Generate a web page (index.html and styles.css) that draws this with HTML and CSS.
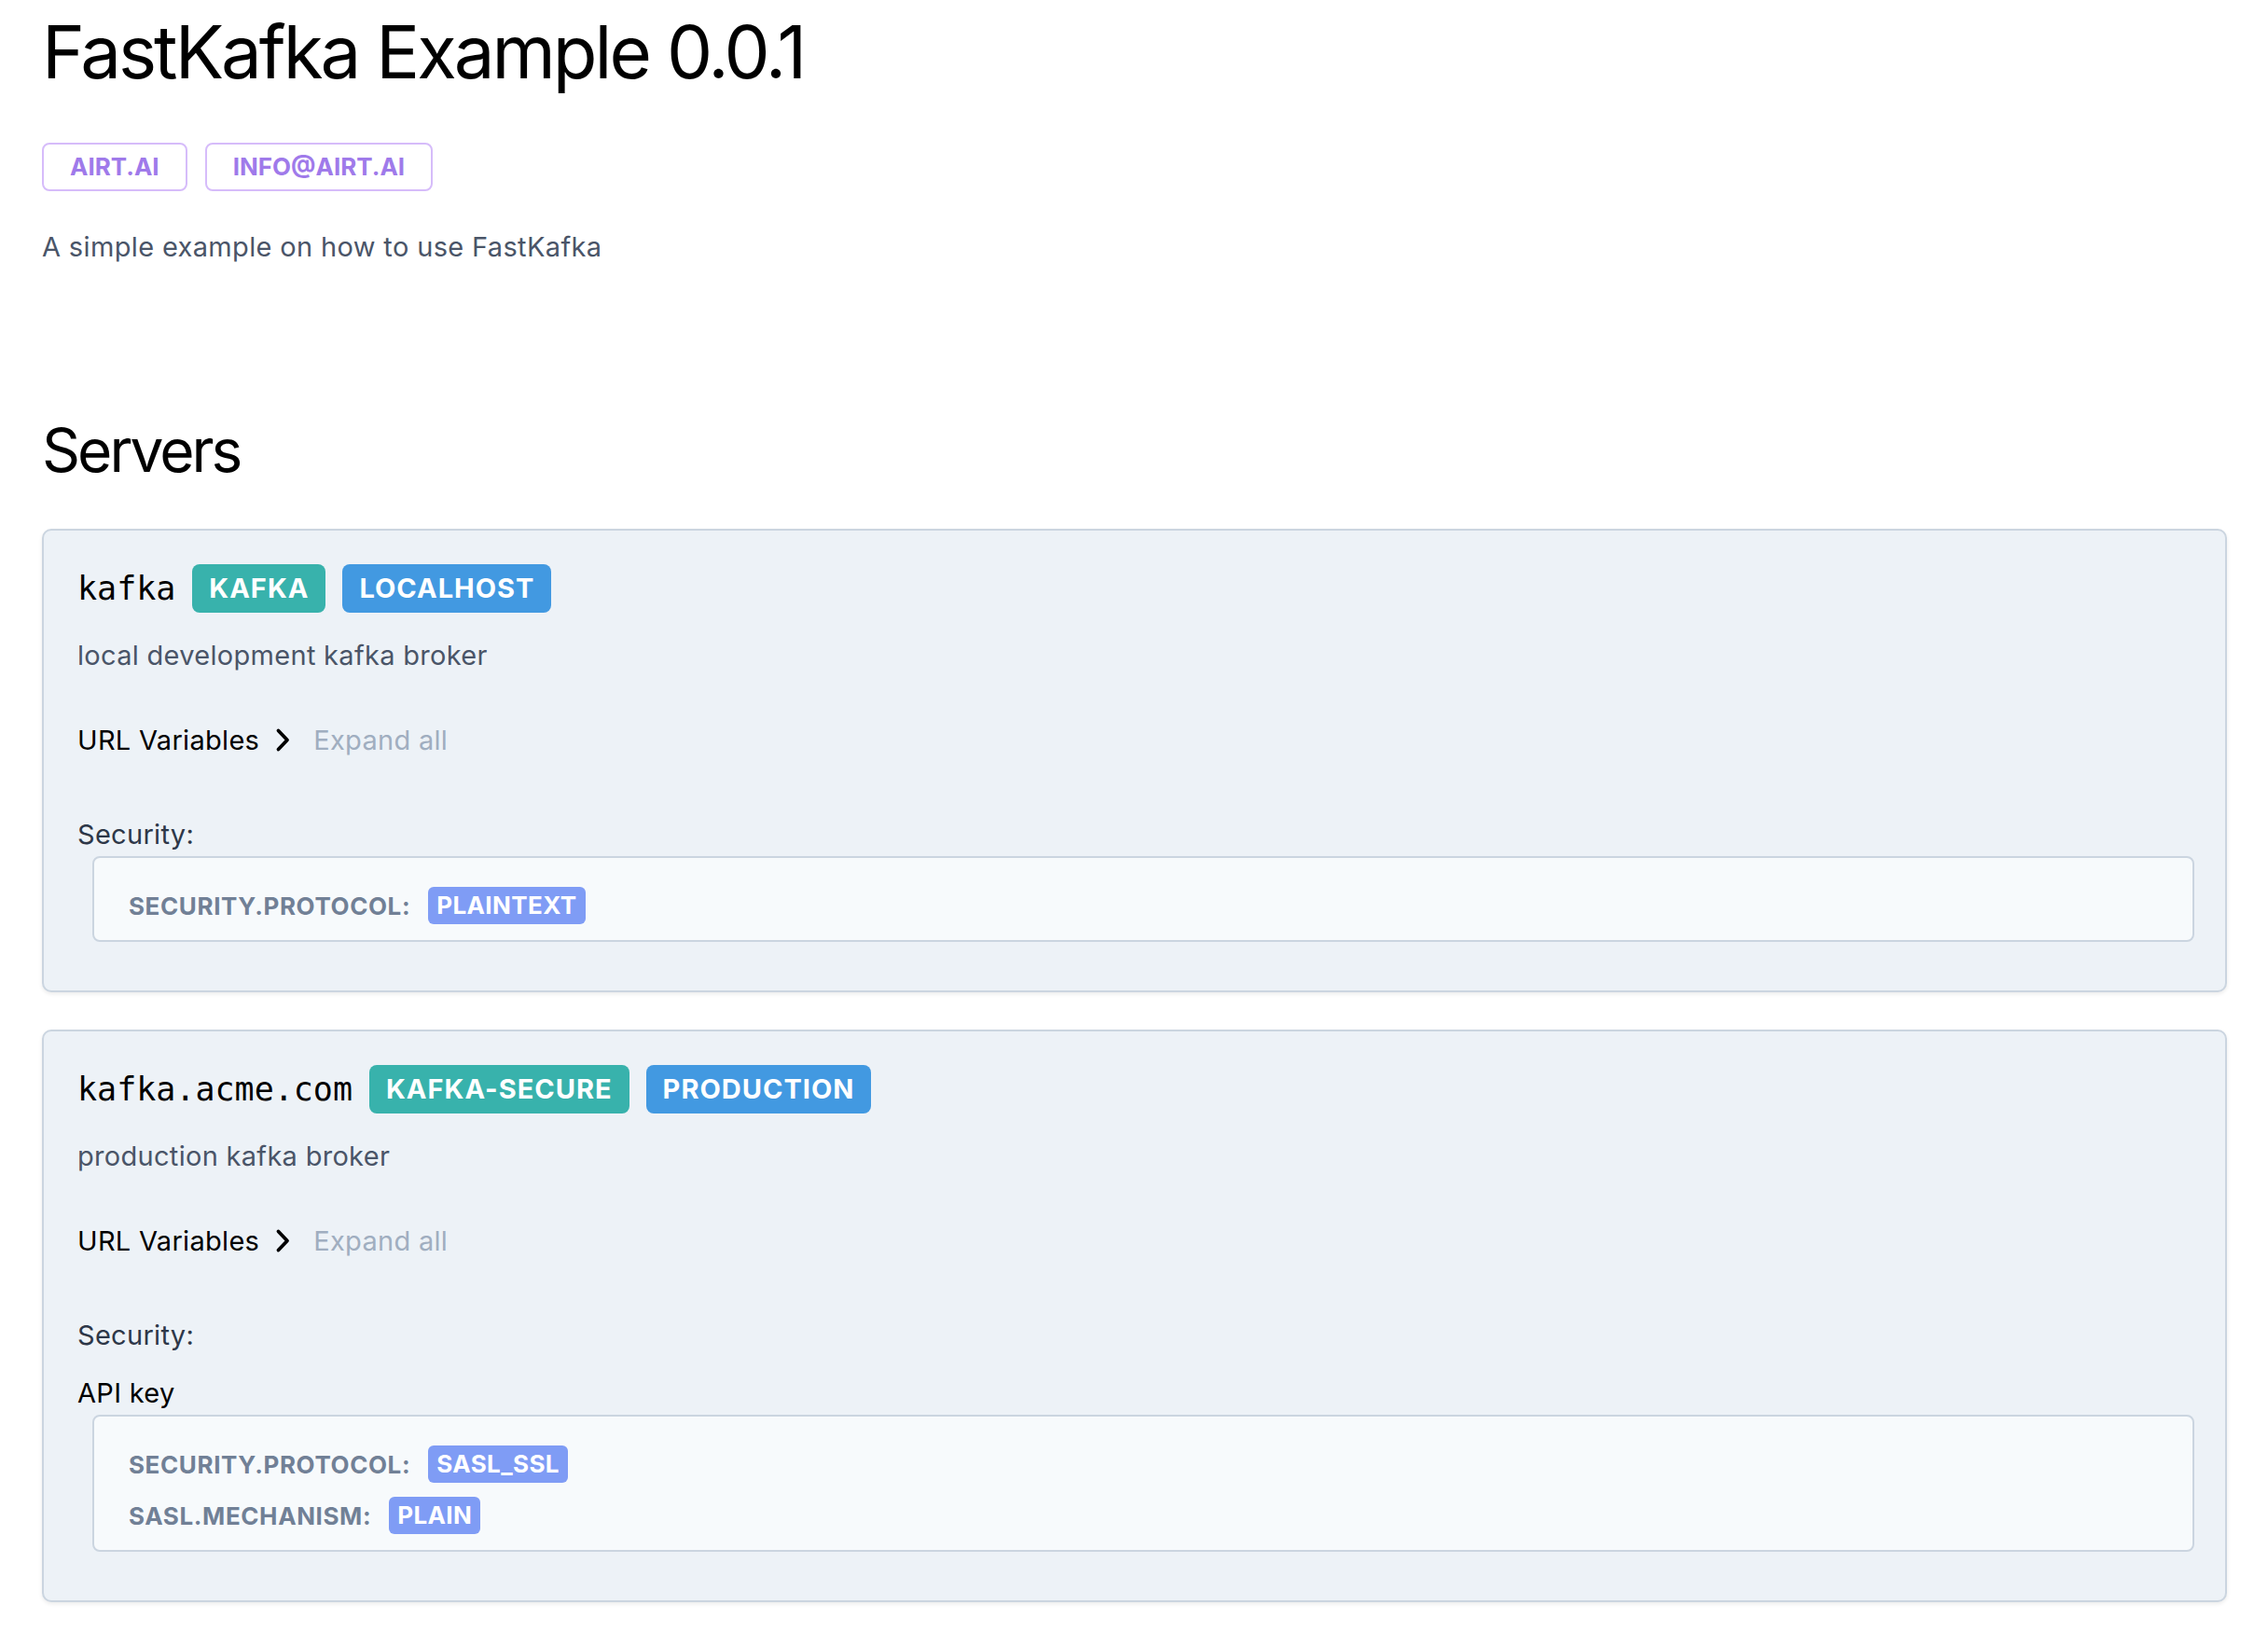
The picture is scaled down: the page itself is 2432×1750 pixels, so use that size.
FILE: index.html
```html
<!DOCTYPE html>
<html lang="en">
<head>
<meta charset="utf-8">
<title>FastKafka Example 0.0.1</title>
<link rel="stylesheet" href="styles.css">
</head>
<body>
<div class="page">
  <header class="info">
    <h1 class="title">FastKafka Example 0.0.1</h1>
    <ul class="links">
      <li class="link">AIRT.AI</li>
      <li class="link">INFO@AIRT.AI</li>
    </ul>
    <p class="desc">A simple example on how to use FastKafka</p>
  </header>

  <section class="servers">
    <h2 class="section-title">Servers</h2>

    <div class="server">
      <div class="server-head">
        <span class="server-url">kafka</span>
        <span class="tag tag-teal">KAFKA</span>
        <span class="tag tag-blue">LOCALHOST</span>
      </div>
      <p class="server-desc">local development kafka broker</p>
      <div class="urlvars">
        <span class="urlvars-label">URL Variables</span>
        <svg class="chev" width="17" height="27" viewBox="0 0 17 27"><polyline points="3.5,3.5 13,13.5 3.5,23.5" fill="none" stroke="#000" stroke-width="3.8" stroke-linecap="round" stroke-linejoin="round"/></svg>
        <span class="expand">Expand all</span>
      </div>
      <div class="sec-label">Security:</div>
      <div class="sec-box">
        <div class="sec-row"><span class="sec-key">SECURITY.PROTOCOL:</span><span class="sec-val">PLAINTEXT</span></div>
      </div>
    </div>

    <div class="server">
      <div class="server-head">
        <span class="server-url">kafka.acme.com</span>
        <span class="tag tag-teal">KAFKA-SECURE</span>
        <span class="tag tag-blue">PRODUCTION</span>
      </div>
      <p class="server-desc">production kafka broker</p>
      <div class="urlvars">
        <span class="urlvars-label">URL Variables</span>
        <svg class="chev" width="17" height="27" viewBox="0 0 17 27"><polyline points="3.5,3.5 13,13.5 3.5,23.5" fill="none" stroke="#000" stroke-width="3.8" stroke-linecap="round" stroke-linejoin="round"/></svg>
        <span class="expand">Expand all</span>
      </div>
      <div class="sec-label">Security:</div>
      <div class="sec-scheme">API key</div>
      <div class="sec-box">
        <div class="sec-row"><span class="sec-key">SECURITY.PROTOCOL:</span><span class="sec-val">SASL_SSL</span></div>
        <div class="sec-row"><span class="sec-key">SASL.MECHANISM:</span><span class="sec-val">PLAIN</span></div>
      </div>
    </div>
  </section>
</div>
</body>
</html>
```

FILE: styles.css
```css
* { box-sizing: border-box; }

body {
  margin: 0;
  background: #ffffff;
  font-family: Inter, "Noto Sans", sans-serif;
  color: #000000;
}

.page {
  padding: 9px 44px 40px 45px;
}

.title {
  margin: 0;
  font-size: 78px;
  line-height: 94px;
  font-weight: 400;
  letter-spacing: -3px;
  color: #000000;
}

.links {
  display: flex;
  gap: 19px;
  margin: 50px 0 0;
  padding: 0;
  list-style: none;
}

.link {
  height: 52px;
  border: 2px solid #d6bcfa;
  border-radius: 8px;
  padding: 0 28px;
  line-height: 48px;
  font-size: 26px;
  font-weight: 700;
  color: #9f7aea;
  background: #ffffff;
}

.desc {
  margin: 38px 0 0;
  font-size: 29px;
  line-height: 44px;
  letter-spacing: 0.35px;
  color: #4a5568;
}

.section-title {
  margin: 157px 0 0;
  font-size: 64px;
  line-height: 78px;
  font-weight: 400;
  letter-spacing: -3px;
  color: #000000;
}

.server {
  margin-top: 45px;
  background: #edf2f7;
  border: 2px solid #cbd5e0;
  border-radius: 10px;
  padding: 36px 33px 36px 36px;
  box-shadow: 0 2px 4px rgba(0, 0, 0, 0.08);
}

.server + .server {
  margin-top: 40px;
}

.server-head {
  display: flex;
  align-items: center;
  gap: 18px;
  height: 52px;
}

.server-url {
  font-family: "DejaVu Sans Mono", "Liberation Mono", monospace;
  font-size: 35px;
  color: #000000;
}

.tag {
  height: 52px;
  line-height: 52px;
  padding: 0 18px;
  border-radius: 8px;
  color: #ffffff;
  font-weight: 700;
  font-size: 29px;
  letter-spacing: 1px;
}

.tag-teal { background: #38b2ac; }
.tag-blue { background: #4299e1; }

.server-desc {
  margin: 24px 0 0;
  font-size: 29px;
  line-height: 44px;
  letter-spacing: 0.3px;
  color: #4a5568;
}

.urlvars {
  margin-top: 46px;
  display: flex;
  align-items: center;
  height: 44px;
  font-size: 29px;
  letter-spacing: 0.3px;
  color: #000000;
}

.chev {
  margin: 0 24px 0 17px;
}

.expand {
  color: #a0aec0;
}

.sec-label {
  margin-top: 58px;
  font-size: 29px;
  line-height: 44px;
  letter-spacing: 0.3px;
  color: #2d3748;
}

.sec-scheme {
  margin-top: 18px;
  font-size: 29px;
  line-height: 44px;
  letter-spacing: 0.3px;
  color: #000000;
}

.sec-box {
  margin: 1px 0 16px 16px;
  background: #f7fafc;
  border: 2px solid #cbd5e0;
  border-radius: 8px;
  padding: 16px 37px 17px;
}

.sec-row {
  margin-top: 15px;
  display: flex;
  align-items: center;
  gap: 19px;
  height: 40px;
}

.sec-key {
  font-size: 26px;
  font-weight: 700;
  letter-spacing: 0.6px;
  color: #718096;
}

.sec-val {
  height: 40px;
  line-height: 40px;
  padding: 0 9px;
  background: #7f9cf5;
  color: #ffffff;
  border-radius: 6px;
  font-size: 26px;
  font-weight: 700;
  letter-spacing: 0.4px;
}
```
